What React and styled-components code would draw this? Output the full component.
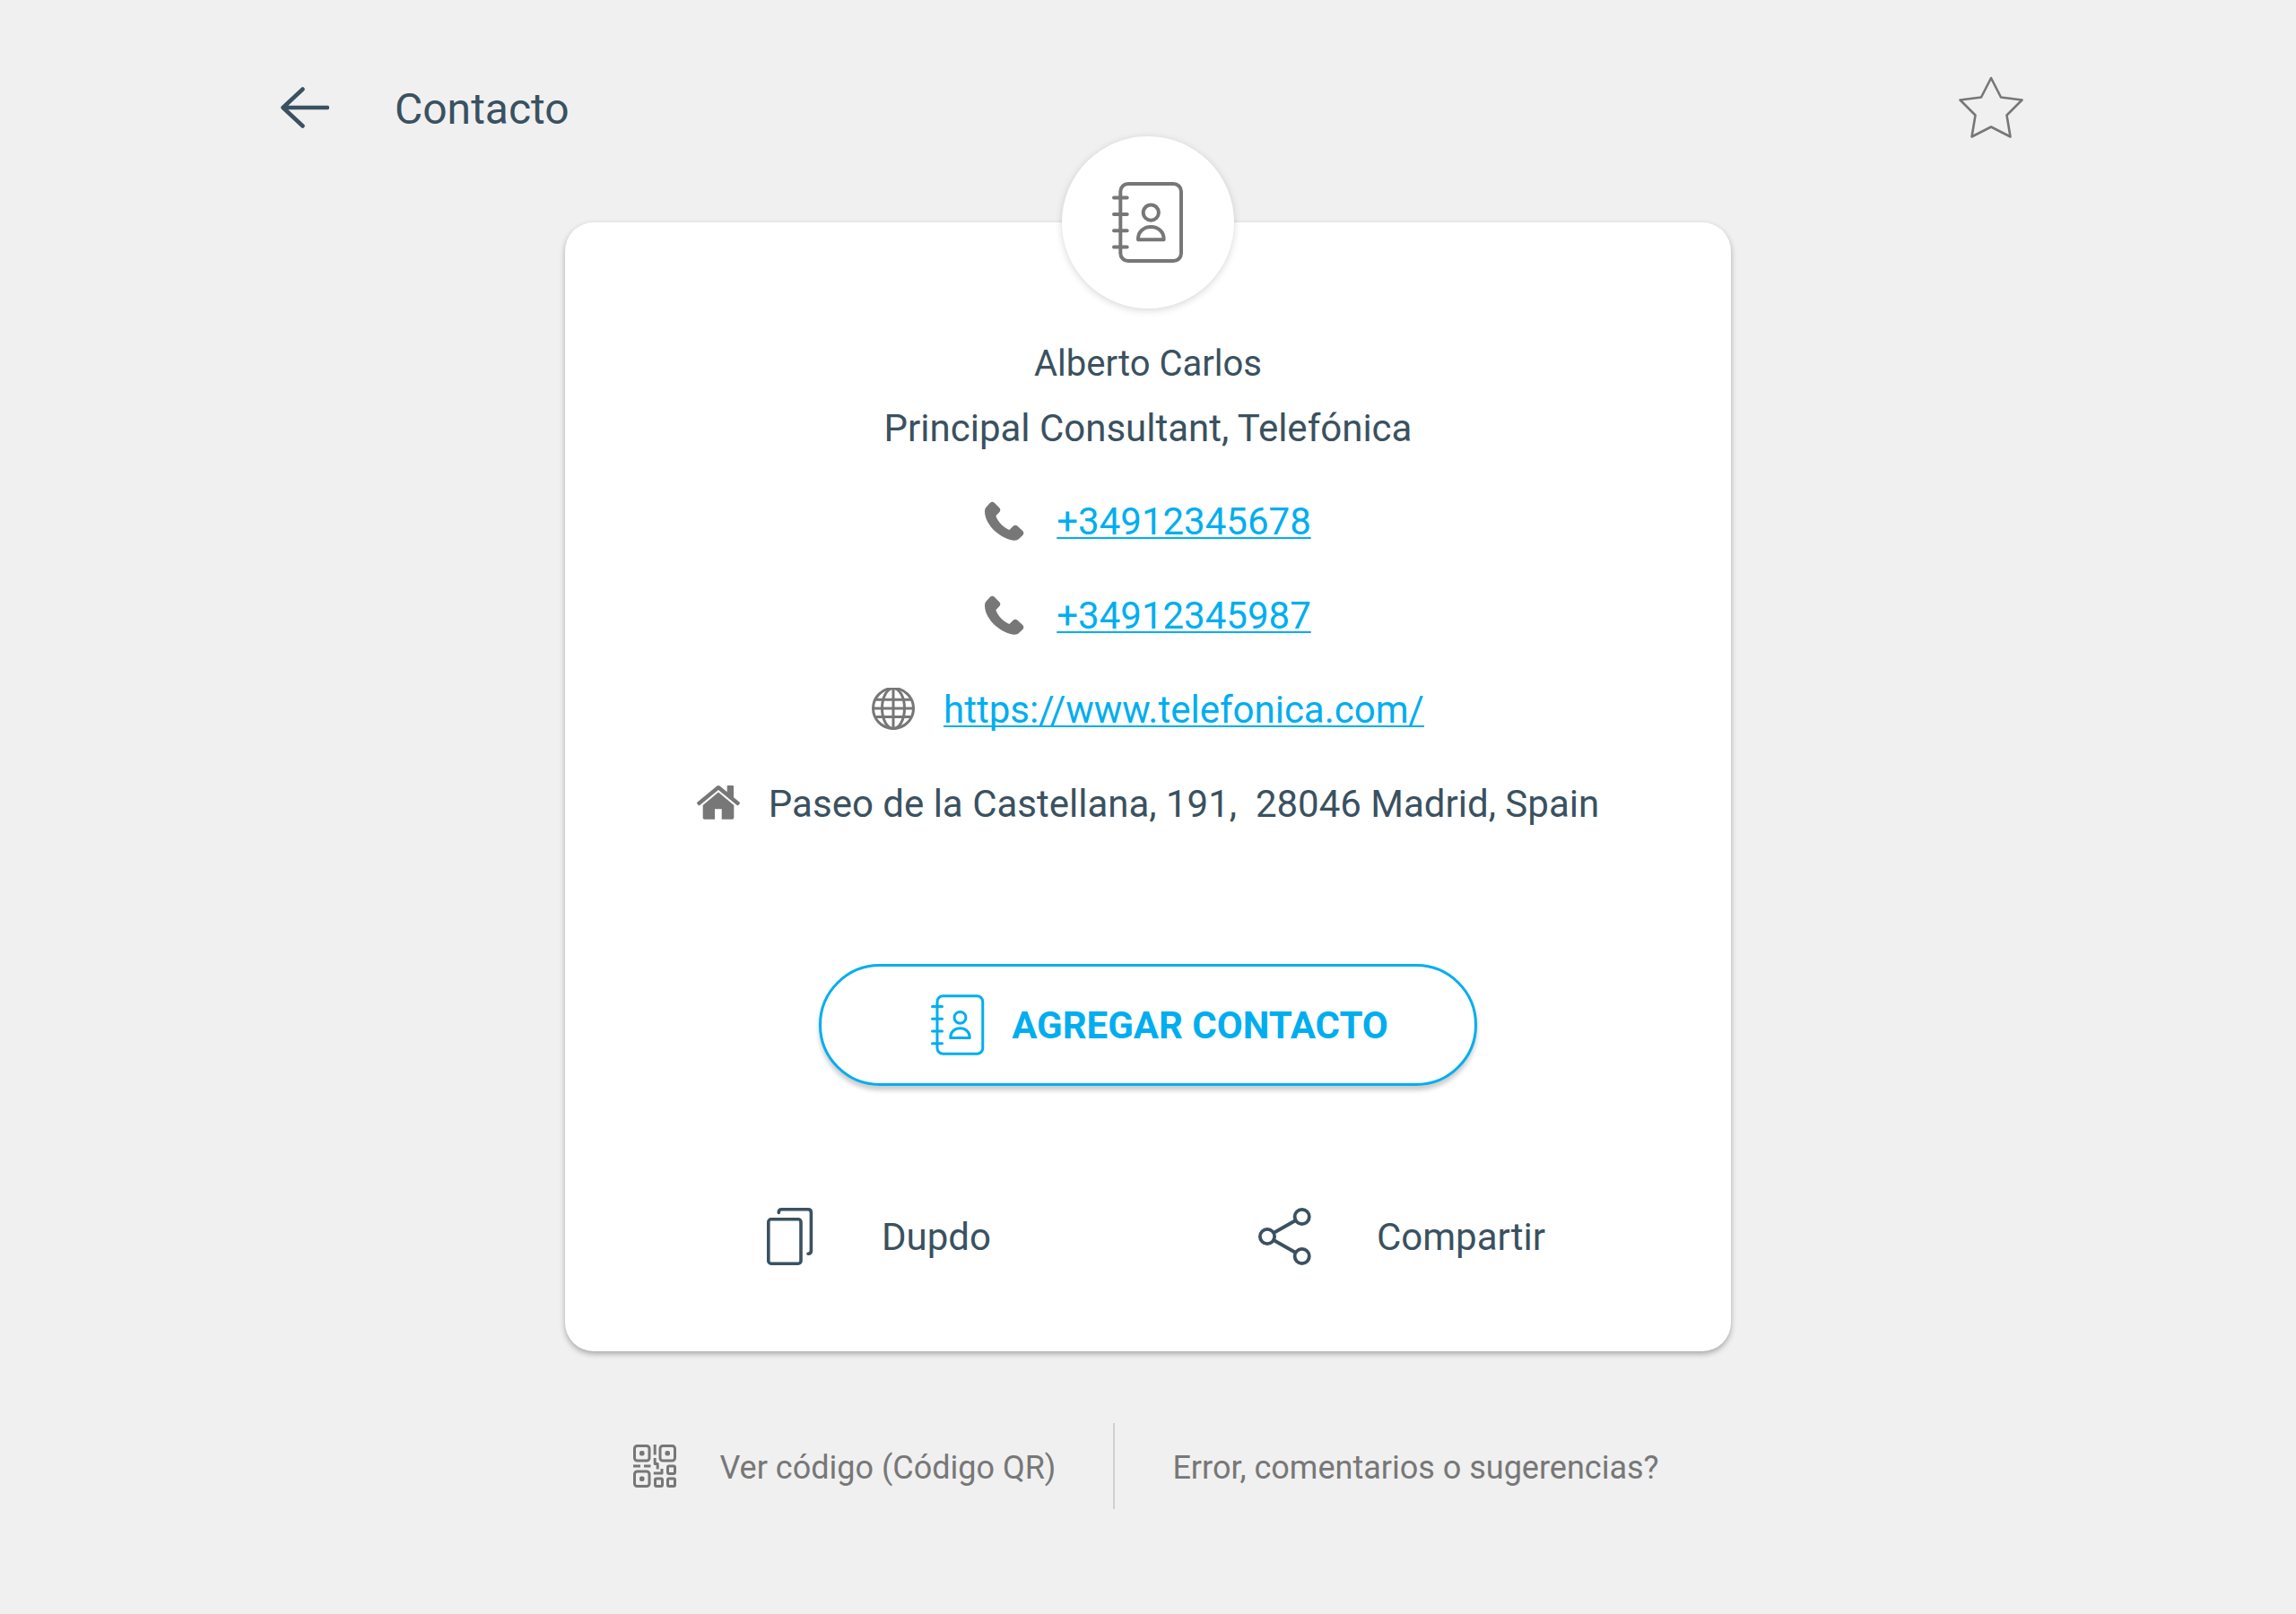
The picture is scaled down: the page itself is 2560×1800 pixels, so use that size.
import React, { Component } from 'react';
import styled, { createGlobalStyle } from 'styled-components';


const GlobalStyle = createGlobalStyle`
* {
box-sizing: border-box;
}
body {
margin: 0;
background: #f0f0f0;
color: #3a5160;
font-family: Roboto, "Liberation Sans", sans-serif;
}
`;

const Page = styled.div`
max-width: 2000px;
margin: 0 auto;
padding-bottom: 80px;
`;

const Header = styled.header`
display: flex;
align-items: center;
height: 240px;
`;

const Title = styled.h1`
flex: 1;
margin: 0;
padding: 2px 0 0 40px;
font-size: 48px;
font-weight: 400;
`;

const IconButton = styled.button`
display: flex;
align-items: center;
justify-content: center;
width: 120px;
height: 120px;
padding: 0;
border: none;
background: none;
color: ${props => props.$muted ? '#777777' : 'inherit'};
cursor: pointer;
`;

const Card = styled.main`
position: relative;
display: flex;
flex-direction: column;
align-items: center;
width: 65%;
margin: 8px auto 0;
padding: 122px 0 96px;
border-radius: 32px;
background: #ffffff;
box-shadow: 0 3px 6px rgba(0, 0, 0, 0.3);
font-size: 42px;
`;

/* sits half over the top edge of the card */
const Avatar = styled.div`
position: absolute;
top: -96px;
left: 50%;
display: flex;
align-items: center;
justify-content: center;
width: 192px;
height: 192px;
margin-left: -96px;
border-radius: 50%;
background: #ffffff;
box-shadow: 0 2px 8px rgba(0, 0, 0, 0.16);
color: #777777;
`;

const Line = styled.p`
margin: 0;
line-height: 72px;
`;

const Name = styled(Line)`
font-size: 40px;
`;

const InfoList = styled.address`
display: flex;
flex-direction: column;
align-items: center;
margin: 14px 0 127px;
font-style: normal;
`;

const InfoRow = styled.div`
display: flex;
align-items: center;
gap: 32px;
height: 105px;
white-space: pre;

svg {
color: #777777;
}
`;

const InfoText = styled.span`
padding-top: 2px;
`;

const InfoLink = styled.a`
padding-top: 2px;
color: #00aeef;
text-decoration: underline;
text-decoration-thickness: 2px;
text-decoration-skip-ink: none;
text-underline-offset: 3px;
`;

const AddButton = styled.button`
display: flex;
align-items: center;
justify-content: center;
gap: 4px;
width: 734px;
height: 136px;
padding: 0;
border: solid 3px #00aeef;
border-radius: 68px;
background: #ffffff;
box-shadow: 0 5px 5px rgba(0, 0, 0, 0.2);
color: #00aeef;
font-family: inherit;
font-size: 42px;
font-weight: 700;
cursor: pointer;
`;

const IconSlot = styled.span`
display: flex;
justify-content: center;
width: ${props => props.$width}px;
`;

const Actions = styled.div`
display: flex;
gap: 284px;
margin-top: 136px;
`;

const Action = styled.button`
display: flex;
align-items: center;
gap: 58px;
height: 64px;
padding: 0;
border: none;
background: none;
color: inherit;
font-family: inherit;
font-size: 42px;
cursor: pointer;
`;

const Footer = styled.footer`
display: flex;
align-items: center;
justify-content: center;
margin-top: 80px;
padding-right: 4px;
`;

const FooterLink = styled.a`
display: flex;
align-items: center;
gap: 48px;
height: 96px;
color: #777777;
font-size: 36px;
line-height: 44px;
text-decoration: none;

span {
padding-top: 4px;
}

& + & {
margin-left: 64px;
padding-left: 64px;
border-left: solid 2px #d0d0d0;
}
`;

const BackIcon = () => (
  <svg width="54" height="46" viewBox="0 0 54 46" fill="none" stroke="currentColor" strokeWidth="4.5" strokeLinecap="round" strokeLinejoin="round">
    <path d="M24.5 2.5L2.5 23l22 20.5M3 23h49" />
  </svg>
);

const StarIcon = () => (
  <svg width="72" height="70" viewBox="0 0 72 70" fill="none" stroke="currentColor" strokeWidth="2.6" strokeLinejoin="round">
    <path d="M36 2L47 23.5 70.5 26.5 53.5 43.5 57.5 67.5 36 56.5 14.5 67.5 18.5 43.5 1.5 26.5 25 23.5z" />
  </svg>
);

const ContactIcon = ({ width, height }) => (
  <svg width={width} height={height} viewBox="0 0 80 90" fill="none" stroke="currentColor" strokeWidth="4" strokeLinecap="round" strokeLinejoin="round">
    <rect x="9.3" y="2" width="67.7" height="86" rx="8.5" />
    <path d="M2 17.6h14.7M2 36h14.7M2 54.3h14.7M2 72.6h14.7" />
    <circle cx="43.3" cy="34.1" r="8.6" />
    <path d="M29 64.3v-1c0-7.5 6.2-13.3 14.3-13.3s14.3 5.8 14.3 13.3v1z" />
  </svg>
);

const PhoneIcon = () => (
  <svg width="48" height="48" viewBox="0 0 48 48" fill="currentColor">
    <path d="M0 14c0-2.5.4-4 1.5-5.2l4.2-4.7c1.6-1.8 3.7-1.8 5.3-.2l5.2 5.4c1.5 1.6 1.5 3.4 0 5l-3.8 4c1.8 6.5 8.4 13 15 15.6l4-3.8c1.6-1.7 3.7-1.7 5.4-.2l5.4 5.2c1.5 1.5 1.5 3.3.1 4.8l-4.3 4.2c-1.2 1.2-2.5 1.6-4.5 1.6C18.5 45 .5 29 0 14z" />
  </svg>
);

const GlobeIcon = () => (
  <svg width="48" height="48" viewBox="0 1 48 48" fill="none" stroke="currentColor" strokeWidth="3">
    <circle cx="24" cy="24" r="22.5" />
    <ellipse cx="24" cy="24" rx="12.5" ry="22.5" />
    <path d="M24 1.5v45M1.5 24h45M4.5 14.3h39M4.5 33.6h39" />
  </svg>
);

const HomeIcon = () => (
  <svg width="48" height="48" viewBox="0 1 48 48" fill="currentColor">
    <path d="M22.2 5.7Q24 4.3 25.8 5.7L33.7 12.3V6q0-1 1-1H40q1 0 1 1v12.3l6.4 5.2q1.1 1 .1 2.1l-1 1.1q-1 1-2.1 0L24 10 3.6 26.7q-1.1 1-2.1 0l-1-1.1q-1-1.1.1-2.1z" />
    <path d="M24 12.6L41.3 27v14q0 1.8-1.8 1.8H27.7V31.3H20v11.5H8.5q-1.8 0-1.8-1.8V27z" />
  </svg>
);

const CopyIcon = () => (
  <svg width="52" height="64" viewBox="0 0 52 64" fill="none" stroke="currentColor" strokeWidth="3.6" strokeLinecap="round">
    <rect x="1.8" y="12.8" width="36.2" height="49.4" rx="3" />
    <path d="M13.3 5.5V5q0-3.2 3.2-3.2H46q3.4 0 3.4 3.4V47.5q0 3.7-3.4 3.7" />
  </svg>
);

const ShareIcon = () => (
  <svg width="59" height="64" viewBox="0 0 59 64" fill="none" stroke="currentColor" strokeWidth="3.8">
    <circle cx="48.7" cy="10" r="8.1" />
    <circle cx="10" cy="32" r="8.1" />
    <circle cx="48.7" cy="54" r="8.1" />
    <path d="M17 28L41.7 14M17 36L41.7 50" />
  </svg>
);

const QrIcon = () => (
  <svg width="48" height="48" viewBox="0 0 48 48" fill="none" stroke="currentColor" strokeWidth="3" strokeLinejoin="round">
    <rect x="1.5" y="1.5" width="16.5" height="16.5" rx="3" />
    <rect x="30" y="1.5" width="16.5" height="16.5" rx="3" />
    <rect x="1.5" y="30" width="16.5" height="16.5" rx="3" />
    <g fill="currentColor" stroke="none">
      <rect x="7" y="7" width="5.5" height="5.5" rx="2" />
      <rect x="35.5" y="7" width="5.5" height="5.5" rx="2" />
      <rect x="7" y="35.5" width="5.5" height="5.5" rx="2" />
    </g>
    <rect x="38.5" y="24" width="8" height="8.5" rx="1.5" />
    <rect x="24.5" y="38" width="8" height="8.5" rx="1.5" />
    <rect x="38.5" y="38" width="8" height="8.5" rx="1.5" />
    <path d="M24.2 0v11.5M24.2 15v6.5h3V27.5M0 24h8M12 24h7.5M22.8 32h9.2v-5" />
  </svg>
);

const contact = {
  name: "Alberto Carlos",
  position: "Principal Consultant, Telefónica",
  phones: ["+34912345678", "+34912345987"],
  web: "https://www.telefonica.com/",
  address: "Paseo de la Castellana, 191,  28046 Madrid, Spain"
};

class App extends Component {
  render() {
    return (
      <Page>
        <GlobalStyle />
        <Header>
          <IconButton type="button" aria-label="Volver"><BackIcon /></IconButton>
          <Title>Contacto</Title>
          <IconButton type="button" aria-label="Favorito" $muted><StarIcon /></IconButton>
        </Header>
        <Card>
          <Avatar><ContactIcon width="80" height="90" /></Avatar>
          <Name>{contact.name}</Name>
          <Line>{contact.position}</Line>
          <InfoList>
            {contact.phones.map(phone => (
              <InfoRow key={phone}>
                <PhoneIcon />
                <InfoLink href={"tel:" + phone}>{phone}</InfoLink>
              </InfoRow>
            ))}
            <InfoRow>
              <GlobeIcon />
              <InfoLink href={contact.web}>{contact.web}</InfoLink>
            </InfoRow>
            <InfoRow>
              <HomeIcon />
              <InfoText>{contact.address}</InfoText>
            </InfoRow>
          </InfoList>
          <AddButton type="button">
            <IconSlot $width={112}><ContactIcon width="60" height="68" /></IconSlot>
            AGREGAR CONTACTO
          </AddButton>
          <Actions>
            <Action type="button">
              <IconSlot $width={88}><CopyIcon /></IconSlot>
              Dupdo
            </Action>
            <Action type="button">
              <IconSlot $width={88}><ShareIcon /></IconSlot>
              Compartir
            </Action>
          </Actions>
        </Card>
        <Footer>
          <FooterLink href="#qr">
            <QrIcon />
            <span>Ver código (Código QR)</span>
          </FooterLink>
          <FooterLink href="#feedback">
            <span>Error, comentarios o sugerencias?</span>
          </FooterLink>
        </Footer>
      </Page>
    )
  }
}

export default App;
